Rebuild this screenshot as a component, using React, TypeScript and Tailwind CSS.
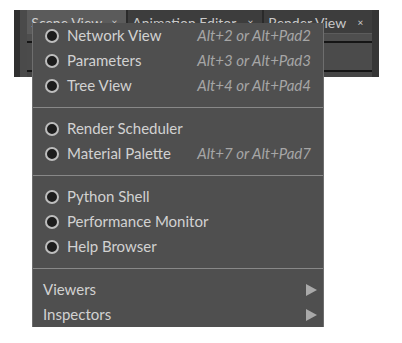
import React from 'react';

type Item = { label: string; shortcut?: string };

const groups: Item[][] = [
  [
    { label: 'Network View', shortcut: 'Alt+2 or Alt+Pad2' },
    { label: 'Parameters', shortcut: 'Alt+3 or Alt+Pad3' },
    { label: 'Tree View', shortcut: 'Alt+4 or Alt+Pad4' },
  ],
  [
    { label: 'Render Scheduler' },
    { label: 'Material Palette', shortcut: 'Alt+7 or Alt+Pad7' },
  ],
  [
    { label: 'Python Shell' },
    { label: 'Performance Monitor' },
    { label: 'Help Browser' },
  ],
];

const submenus = ['Viewers', 'Inspectors'];

const Tab = ({ label, active, width }: { label: string; active?: boolean; width: string }) => (
  <div
    className={`${width} h-full flex items-center justify-between pl-[4px] pr-[9px] text-[14px] ${
      active ? 'bg-[#5b5b5b] text-[#d0d0d0]' : 'bg-[#3d3d3d] text-[#c8c8c8]'
    }`}
  >
    <span className="mt-[2px]">{label}</span>
    <span className="text-[10px] mt-[2px] text-[#cfcfcf]">×</span>
  </div>
);

const Separator = () => (
  <div className="pt-[9px] pb-[8px]">
    <div className="h-px bg-[#888888]" />
  </div>
);

export default function App() {
  return (
    <div className="relative w-[402px] h-[343px] pt-[10px] bg-white font-['Lato','Noto_Sans',sans-serif]">
      {/* window behind the menu */}
      <div className="ml-[14px] w-[365px] h-[67px] flex bg-[#2f2f2f]">
        <div className="w-[6px] bg-[#303030]" />
        <div className="w-[8px] bg-[#4a4a4a]" />
        <div className="flex-1 flex flex-col">
          <div className="h-[23px] flex gap-[2px] bg-[#2a2a2a]">
            <Tab label="Scene View" active width="w-[99px]" />
            <Tab label="Animation Editor" width="w-[134px]" />
            <Tab label="Render View" width="w-[108px]" />
          </div>
          <div className="h-px bg-[#5c5c5c]" />
          <div className="h-[7px] bg-[#4e4e4e]" />
          <div className="h-[2px] bg-[#151515]" />
          <div className="flex-1 bg-[#4b4b4b]" />
          <div className="h-[2px] bg-[#151515]" />
          <div className="h-[5px] bg-[#454545]" />
        </div>
        <div className="w-[7px] bg-[#363636]" />
      </div>

      {/* popup menu */}
      <div className="absolute left-[32px] top-[23px] w-[292px] bg-[#4f4f4f] border-l border-r border-[#6e6e6e] text-[15px] leading-none">
        {groups.map((group, gi) => (
          <React.Fragment key={gi}>
            {group.map((item) => (
              <div key={item.label} className="h-[25px] flex items-center pl-[12px] pr-[12px]">
                <span className="w-[14px] h-[14px] rounded-full bg-[#1c1c1c] border-[2px] border-[#bdbdbd] shrink-0" />
                <span className="ml-[8px] text-[#d2d2d2]">{item.label}</span>
                {item.shortcut && (
                  <span className="ml-auto italic text-[#a6a6a6]">{item.shortcut}</span>
                )}
              </div>
            ))}
            <Separator />
          </React.Fragment>
        ))}
        {submenus.map((label) => (
          <div key={label} className="h-[25px] flex items-center pl-[10px] pr-[6px]">
            <span className="text-[#d2d2d2]">{label}</span>
            <svg className="ml-auto" width="11" height="12" viewBox="0 0 11 12">
              <path d="M0 0 L11 6 L0 12 Z" fill="#a9a9a9" />
            </svg>
          </div>
        ))}
      </div>
    </div>
  );
}
